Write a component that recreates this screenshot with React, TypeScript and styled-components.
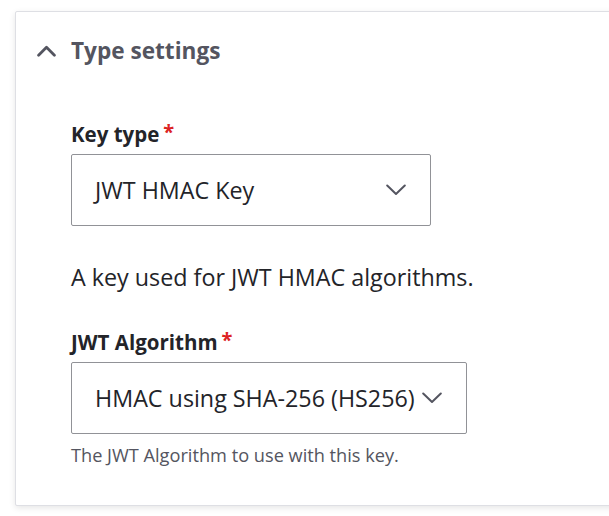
import React from "react";
import styled, { createGlobalStyle } from "styled-components";

const GlobalStyle = createGlobalStyle`
  html, body {
    margin: 0;
    padding: 0;
    background: #ffffff;
  }
  body {
    font-family: "Open Sans", "Noto Sans", "Liberation Sans", sans-serif;
    color: #232429;
  }
`;

const Page = styled.div`
  width: 609px;
  height: 516px;
  overflow: hidden;
  padding: 11px 0 0 15px;
  box-sizing: border-box;
`;

const Card = styled.section`
  margin-right: -12px;
  border: 1px solid #dedfe4;
  border-radius: 2px;
  background: #ffffff;
  box-shadow: 0 2px 6px rgba(0, 0, 0, 0.1);
`;

const Summary = styled.div`
  display: flex;
  align-items: center;
  gap: 15px;
  height: 78px;
  padding-left: 21px;
  box-sizing: border-box;
  color: #545560;
  font-size: 22.6px;
  font-weight: 700;
  line-height: 30px;
`;

const Content = styled.div`
  display: flex;
  flex-direction: column;
  align-items: flex-start;
  padding: 30px 20px 38px 55px;
`;

const Field = styled.div<{ $gap?: number }>`
  display: flex;
  flex-direction: column;
  align-items: flex-start;
  margin-top: ${(p) => p.$gap ?? 0}px;
`;

const Label = styled.label`
  display: flex;
  align-items: flex-start;
  font-size: 20.5px;
  font-weight: 700;
  line-height: 28px;
  color: #232429;
  margin-bottom: 6px;
`;

const Required = styled.span`
  color: #dc2323;
  margin-left: 4px;
  font-size: 20px;
  line-height: 24px;
`;

const SelectBox = styled.div<{ $width?: number }>`
  display: inline-flex;
  align-items: center;
  justify-content: space-between;
  gap: 7px;
  box-sizing: border-box;
  width: ${(p) => (p.$width ? `${p.$width}px` : "auto")};
  height: 72px;
  padding: 0 24px 0 23px;
  border: 1px solid #919297;
  border-radius: 2px;
  font-size: 23.3px;
  line-height: 30px;
  color: #232429;
  background: #ffffff;
`;

const Description = styled.div`
  margin-top: 36px;
  font-size: 23.3px;
  line-height: 30px;
  color: #232429;
`;

const Help = styled.div`
  margin-top: 9px;
  font-size: 18.2px;
  line-height: 24px;
  color: #545560;
`;

const ChevronUp = () => (
  <svg width="19" height="12" viewBox="0 0 19 12" aria-hidden="true">
    <path
      d="M1.6 10.2 L9.5 2.3 L17.4 10.2"
      fill="none"
      stroke="#545560"
      strokeWidth="2.8"
      strokeLinecap="round"
      strokeLinejoin="round"
    />
  </svg>
);

const ChevronDown = () => (
  <svg width="20" height="12" viewBox="0 0 20 12" aria-hidden="true">
    <path
      d="M1.2 1.5 L10 10 L18.8 1.5"
      fill="none"
      stroke="#545560"
      strokeWidth="2"
      strokeLinecap="round"
      strokeLinejoin="round"
    />
  </svg>
);

export default function App() {
  return (
    <>
      <GlobalStyle />
      <Page>
        <Card>
          <Summary>
            <ChevronUp />
            <span>Type settings</span>
          </Summary>
          <Content>
            <Field>
              <Label>
                Key type<Required>*</Required>
              </Label>
              <SelectBox $width={360}>
                <span>JWT HMAC Key</span>
                <ChevronDown />
              </SelectBox>
            </Field>
            <Description>A key used for JWT HMAC algorithms.</Description>
            <Field $gap={36}>
              <Label>
                JWT Algorithm<Required>*</Required>
              </Label>
              <SelectBox>
                <span>HMAC using SHA-256 (HS256)</span>
                <ChevronDown />
              </SelectBox>
            </Field>
            <Help>The JWT Algorithm to use with this key.</Help>
          </Content>
        </Card>
      </Page>
    </>
  );
}
